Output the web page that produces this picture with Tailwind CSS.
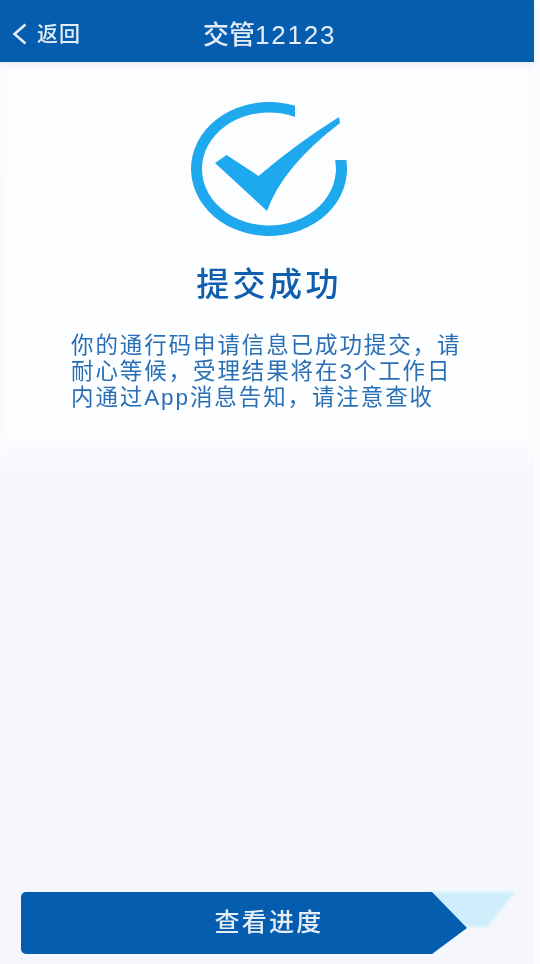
<!DOCTYPE html>
<html lang="zh-CN">
  <head>
    <meta charset="UTF-8" />
    <meta name="viewport" content="width=device-width, initial-scale=1.0" />
    <title>交管12123</title>
    <script src="https://cdn.jsdelivr.net/npm/@tailwindcss/browser@4"></script>
  </head>
  <body class="bg-[#fbfcfe] font-['Liberation_Sans','Noto_Sans_CJK_SC',sans-serif]">
    <div class="w-[540px] h-[964px] flex overflow-hidden">
      <div class="w-[534px] h-full flex flex-col bg-gradient-to-b from-[#f8fafd] from-45% to-[#f5f7fc] to-50%">
        <!-- Header -->
        <header class="h-[62px] shrink-0 flex items-center bg-[#055db0] text-[#e6edf5] relative shadow-[0_2px_6px_rgba(0,40,90,0.08)]">
          <div class="flex items-center pl-3 pt-[5px] gap-[10px] blur-[0.5px]">
            <svg width="15" height="22" viewBox="0 0 15 22" fill="none" stroke="#e6edf5" stroke-width="2.6">
              <path d="M13.5 1.5 L2.5 11 L13.5 20.5" />
            </svg>
            <span class="text-[21px] leading-none font-medium tracking-[1px]">返回</span>
          </div>
          <h1 class="absolute left-[203px] top-[16px] text-[26px] leading-[38px] font-medium blur-[0.5px]">交管<span class="tracking-[1.8px]">12123</span></h1>
        </header>

        <!-- Result card -->
        <main class="h-[386px] shrink-0 mt-[12px] mx-[6px] flex flex-col items-center bg-gradient-to-b from-[#fcfdfe] via-[#fdfeff] via-92% to-[#f6f8fc] shadow-[0_-2px_8px_4px_#fbfcfe]">
          <svg class="mt-[28px] ml-[4px]" width="156" height="134" viewBox="0 0 156 134" fill="none">
            <path d="M104 3.8 A78 67 0 1 0 155.3 58 L144.1 58 A67 56.5 0 1 1 104 14.9 Z" fill="#1ea8ee" />
            <path d="M24 61 L35.5 53 L67.5 74 Q105 42 148 15 L149 21 Q91.5 65 76 109 Z" fill="#1ea8ee" />
          </svg>
          <h2 class="mt-[26px] ml-[4px] text-[33px] leading-[46px] font-medium tracking-[3.4px] text-[#0f5fae] blur-[0.4px]">提交成功</h2>
          <p class="mt-[25px] ml-[8px] w-[400px] text-[22.5px] leading-[26px] tracking-[1.9px] text-[#2a6fb5] blur-[0.6px]">
            你的通行码申请信息已成功提交，请<br />耐心等候，受理结果将在3个工作日<br />内通过App消息告知，请注意查收
          </p>
        </main>

        <!-- Progress button -->
        <div class="mt-auto mb-[10px] ml-[21px] relative h-[62px] w-[494px]">
          <div class="absolute inset-0 blur-[1.5px]">
            <div class="h-full bg-[#cdeefa] [clip-path:polygon(400px_0,494px_0,466px_35px,400px_35px)]"></div>
          </div>
          <button class="relative h-full w-[446px] pl-[50px] bg-[#055db0] rounded-l-[5px] text-[25px] font-medium tracking-[2.2px] text-[#e6edf5] [clip-path:polygon(0_0,411px_0,446px_36px,411px_62px,0_62px)]">
            <span class="blur-[0.5px] inline-block">查看进度</span>
          </button>
        </div>
      </div>
    </div>
  </body>
</html>
